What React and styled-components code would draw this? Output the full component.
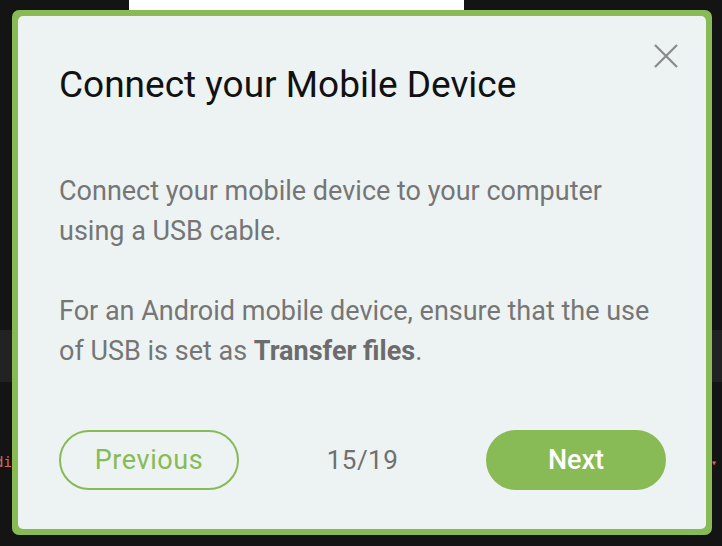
import React from "react";
import styled, { createGlobalStyle } from "styled-components";

const Global = createGlobalStyle`
  html, body { margin: 0; padding: 0; background: #141414; }
  body { width: 722px; height: 546px; overflow: hidden; font-family: Roboto, "Liberation Sans", sans-serif; }
  * { box-sizing: border-box; }
`;

const Page = styled.div`
  position: relative;
  width: 722px;
  height: 546px;
  background: #141414;
  display: flex;
  flex-direction: column;
`;

const TopStrip = styled.div`
  height: 10px;
  display: flex;
`;

const Tab = styled.div`
  margin-left: 129px;
  width: 335px;
  height: 10px;
  background: #ffffff;
`;

const Band = styled.div`
  margin-top: 320px;
  height: 52px;
  background: #222222;
`;

const CodeLine = styled.div`
  margin-top: 70px;
  height: 20px;
  display: flex;
  justify-content: space-between;
  align-items: center;
  font-family: "DejaVu Sans Mono", "Liberation Mono", monospace;
  font-size: 14px;
  color: #d9675c;
`;

const CodeText = styled.span`
  margin-left: -5px;
`;

const Caret = styled.span`
  margin-right: 5px;
  font-size: 10px;
`;

const Dialog = styled.div`
  position: absolute;
  left: 12px;
  top: 10px;
  width: 700px;
  height: 525px;
  border: 6px solid #88ba56;
  border-radius: 7px;
  background: #88ba56;
`;

const Panel = styled.div`
  position: relative;
  height: 100%;
  background: #edf3f2;
  border-radius: 5px;
  padding: 49px 40px 0 41px;
  display: flex;
  flex-direction: column;
`;

const Close = styled.button`
  position: absolute;
  top: 27px;
  right: 27px;
  width: 26px;
  height: 26px;
  padding: 0;
  border: none;
  background: transparent;
  display: flex;
  align-items: center;
  justify-content: center;
`;

const Title = styled.h1`
  margin: 0;
  font-size: 37px;
  line-height: 40px;
  font-weight: 400;
  color: #111111;
`;

const Body = styled.div`
  margin-top: 66px;
`;

const Para = styled.p`
  margin: 0 0 40px;
  font-size: 27px;
  line-height: 40px;
  color: #767676;
  &:last-child { margin-bottom: 0; }
  b { font-weight: 700; color: #6c6c6c; }
`;

const Footer = styled.div`
  margin-top: 59px;
  display: flex;
  align-items: center;
  justify-content: space-between;
`;

const Btn = styled.button`
  width: 180px;
  height: 60px;
  border-radius: 30px;
  border: 2px solid #88ba56;
  background: ${(p) => (p.$primary ? "#88ba56" : "transparent")};
  color: ${(p) => (p.$primary ? "#ffffff" : "#88ba56")};
  font-family: Roboto, "Liberation Sans", sans-serif;
  font-size: 27px;
  letter-spacing: ${(p) => (p.$primary ? "0" : "0.6px")};
  font-weight: ${(p) => (p.$primary ? 500 : 400)};
  display: flex;
  align-items: center;
  justify-content: center;
  padding: 0;
`;

const Counter = styled.span`
  font-size: 26px;
  color: #707070;
  margin-left: 0;
  letter-spacing: 0.5px;
`;

export default function App() {
  return (
    <>
      <Global />
      <Page>
        <TopStrip>
          <Tab />
        </TopStrip>
        <Band />
        <CodeLine>
          <CodeText>di</CodeText>
          <Caret>▾</Caret>
        </CodeLine>
        <Dialog>
          <Panel>
            <Close aria-label="Close">
              <svg width="26" height="26" viewBox="0 0 26 26">
                <path d="M2 2 L24 24 M24 2 L2 24" stroke="#8a8a8a" strokeWidth="2.2" fill="none" />
              </svg>
            </Close>
            <Title>Connect your Mobile Device</Title>
            <Body>
              <Para>Connect your mobile device to your computer using a USB cable.</Para>
              <Para>
                For an Android mobile device, ensure that the use of USB is set as <b>Transfer files</b>.
              </Para>
            </Body>
            <Footer>
              <Btn>Previous</Btn>
              <Counter>15/19</Counter>
              <Btn $primary>Next</Btn>
            </Footer>
          </Panel>
        </Dialog>
      </Page>
    </>
  );
}
